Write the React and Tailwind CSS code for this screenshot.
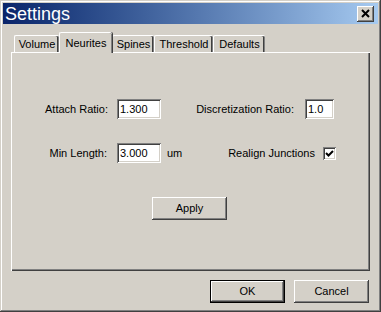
import React from 'react';

const raised =
  'shadow-[inset_-1px_-1px_#404040,inset_1px_1px_#ffffff,inset_-2px_-2px_#808080,inset_2px_2px_#d4d0c8]';
const sunken =
  'shadow-[inset_1px_1px_#808080,inset_-1px_-1px_#ffffff,inset_2px_2px_#404040,inset_-2px_-2px_#d4d0c8]';

const tabs = [
  { name: 'Volume', w: 'w-[45px]' },
  { name: 'Neurites', w: 'w-[53px]', active: true },
  { name: 'Spines', w: 'w-[42px]' },
  { name: 'Threshold', w: 'w-[59px]' },
  { name: 'Defaults', w: 'w-[52px]' },
];

function Field({ value, width }) {
  return (
    <div className={`h-[20px] ${width} bg-white ${sunken} flex items-center pl-[3px] pt-px text-black`}>
      {value}
    </div>
  );
}

function Button({ label, isDefault }) {
  if (isDefault) {
    return (
      <div className="w-[75px] h-[23px] border border-black">
        <div className={`w-full h-full ${raised} flex items-center justify-center`}>{label}</div>
      </div>
    );
  }
  return (
    <div className={`w-[75px] h-[23px] ${raised} flex items-center justify-center`}>{label}</div>
  );
}

export default function App() {
  return (
    <div
      className="w-[381px] h-[312px] bg-[#d4d0c8] p-[3px] flex flex-col text-[11px] text-black shadow-[inset_-1px_-1px_#404040,inset_1px_1px_#d4d0c8,inset_-2px_-2px_#808080,inset_2px_2px_#ffffff]"
      style={{ fontFamily: '"Liberation Sans", Arial, sans-serif' }}
    >
      {/* Title bar */}
      <div className="h-[21px] bg-gradient-to-r from-[#0a246a] to-[#a6caf0] flex items-center justify-between pl-[2px] pr-[4px]">
        <span className="text-white text-[18px] leading-none">Settings</span>
        <div className={`w-[17px] h-[16px] bg-[#d4d0c8] ${raised} flex items-center justify-center`}>
          <svg width="9" height="9" viewBox="0 0 9 9">
            <path d="M1 1 L8 8 M8 1 L1 8" stroke="#000" strokeWidth="2" />
          </svg>
        </div>
      </div>

      <div className="flex flex-col px-[8px] mt-[8px]">
        {/* Tabs */}
        <div className="flex items-end h-[20px] pl-[3px]">
          {tabs.map((t) =>
            t.active ? (
              <div
                key={t.name}
                className={`${t.w} h-[21px] -mb-px relative z-10 bg-[#d4d0c8] rounded-t-[2px] border-t border-l border-white shadow-[inset_-1px_0_#808080,1px_0_#404040] flex items-start justify-center pt-[2px]`}
              >
                {t.name}
              </div>
            ) : (
              <div
                key={t.name}
                className={`${t.w} h-[17px] rounded-t-[2px] border-t border-l border-white shadow-[inset_-1px_0_#808080,inset_-2px_0_#404040] flex items-center justify-center pt-px`}
              >
                {t.name}
              </div>
            )
          )}
        </div>

        {/* Panel */}
        <div className="h-[219px] shadow-[inset_1px_1px_#ffffff,inset_-1px_-1px_#404040,inset_-2px_-2px_#808080] flex flex-col pt-[47px]">
          <div className="flex items-center h-[20px]">
            <div className="w-[97px] text-right">Attach Ratio:</div>
            <div className="ml-[9px]">
              <Field value="1.300" width="w-[44px]" />
            </div>
            <div className="w-[133px] text-right">Discretization Ratio:</div>
            <div className="ml-[11px]">
              <Field value="1.0" width="w-[29px]" />
            </div>
          </div>

          <div className="flex items-center h-[20px] mt-[24px]">
            <div className="w-[96px] text-right">Min Length:</div>
            <div className="ml-[10px]">
              <Field value="3.000" width="w-[44px]" />
            </div>
            <div className="ml-[6px] w-[20px]">um</div>
            <div className="w-[128px] text-right">Realign Junctions</div>
            <div className={`ml-[8px] w-[13px] h-[13px] bg-white ${sunken} flex items-center justify-center`}>
              <svg width="9" height="9" viewBox="0 0 9 9">
                <path d="M1 4 L3.5 6.5 L8 2" stroke="#000" strokeWidth="2" fill="none" />
              </svg>
            </div>
          </div>

          <div className="mt-[34px] ml-[141px]">
            <Button label="Apply" />
          </div>
        </div>

        {/* Dialog buttons */}
        <div className="flex justify-end gap-[9px] mt-[9px] pr-[1px]">
          <Button label="OK" isDefault />
          <Button label="Cancel" />
        </div>
      </div>
    </div>
  );
}
